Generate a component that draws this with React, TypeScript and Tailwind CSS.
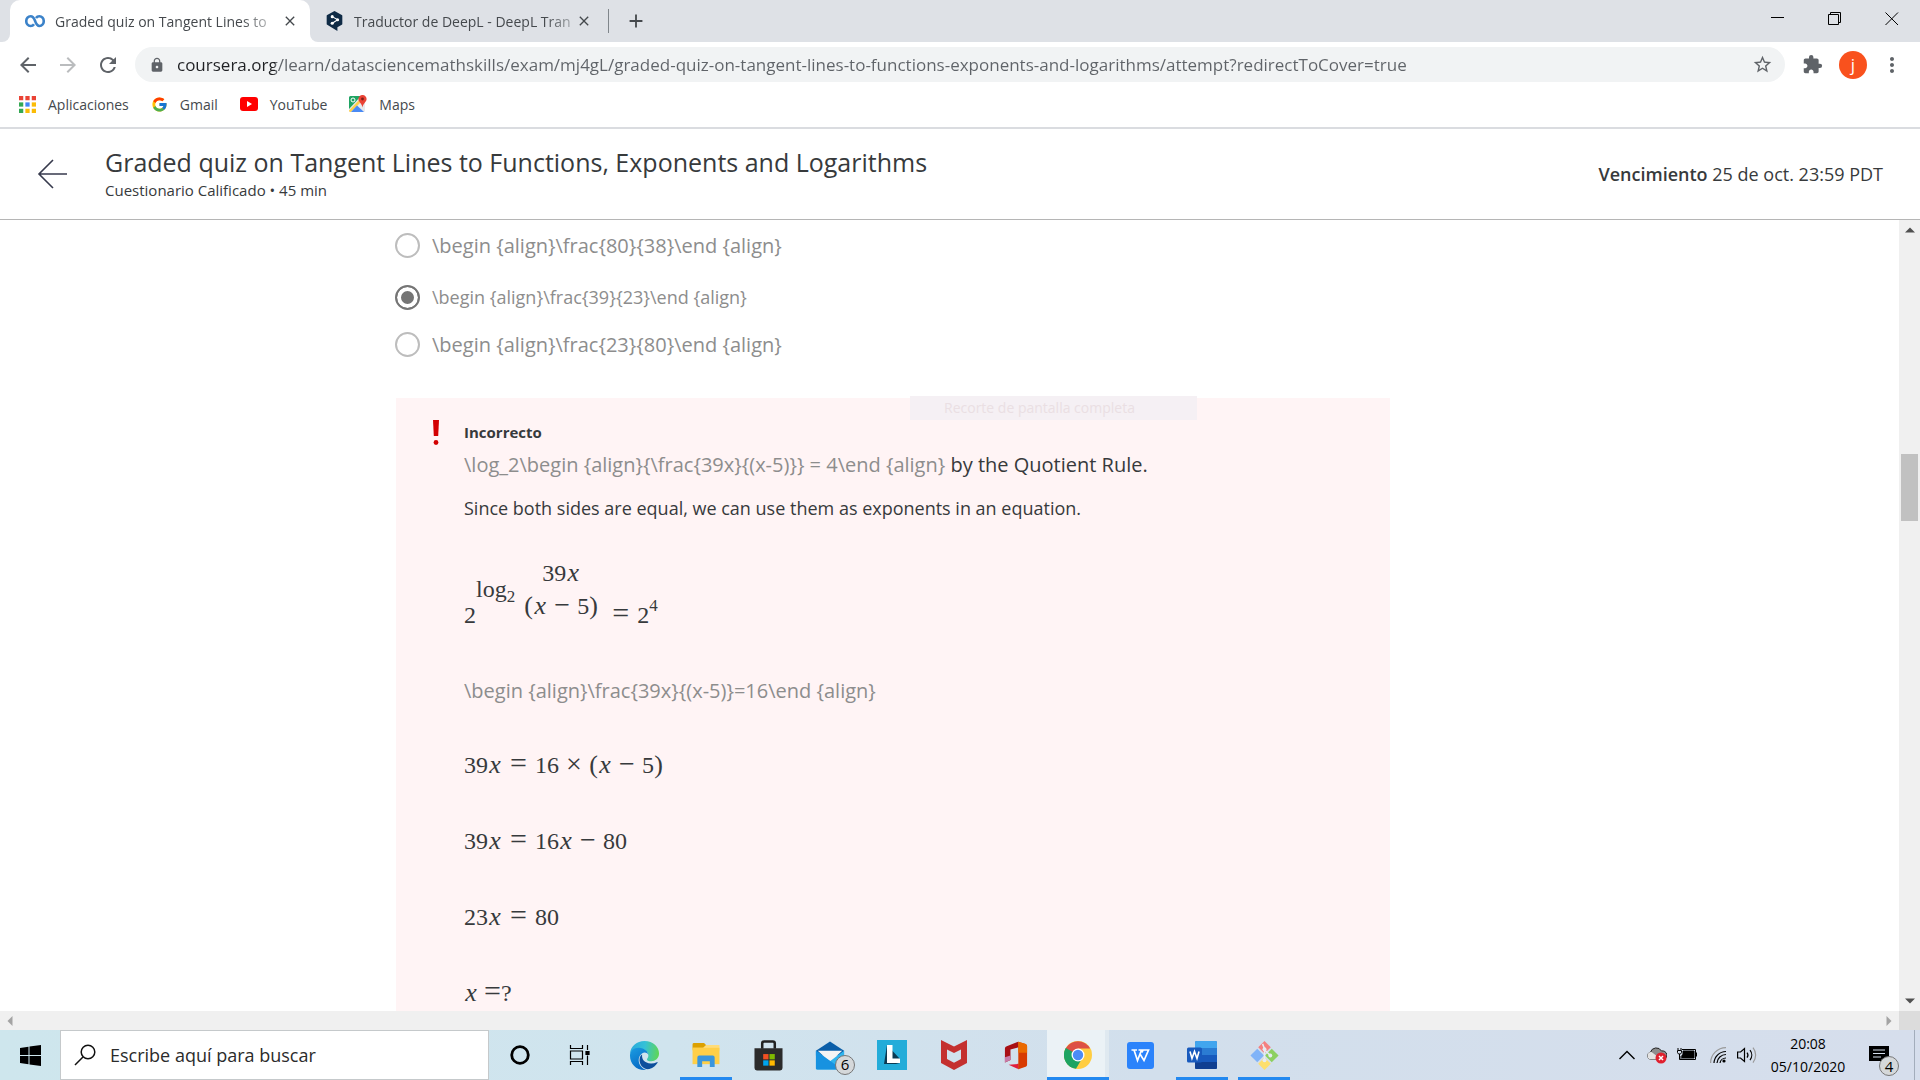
import React from "react";
import {
  MdArrowBack,
  MdArrowForward,
  MdRefresh,
  MdLock,
  MdStarBorder,
  MdExtension,
  MdMoreVert,
  MdAdd,
  MdClose,
} from "react-icons/md";
import { FcGoogle } from "react-icons/fc";

/* ---------- Browser chrome ---------- */

function CourseraIcon() {
  return (
    <svg viewBox="0 0 20 14" className="h-[14px] w-5 shrink-0" fill="none" stroke="#3b82c9" strokeWidth="2.600">
      <path d="M9 10.200C8.200 11.400 7 12 5.600 12A4.300 4.600 0 0 1 1.300 7 4.300 4.600 0 0 1 5.600 2.200C8 2.200 9 4 10 6.800S12 12 14.400 12A4.300 4.600 0 0 0 18.700 7 4.300 4.600 0 0 0 14.400 2.200C13 2.200 11.800 2.800 11 4" />
    </svg>
  );
}

function DeepLIcon() {
  return (
    <svg viewBox="0 0 18 22" className="h-5 w-[17px] shrink-0">
      <path d="M9 0l8 4.400a1 1 0 0 1 .6.900v9a1 1 0 0 1-.6.900L12.200 18v4L1 15.200a1 1 0 0 1-.6-.9v-9A1 1 0 0 1 1 4.400z" fill="#0f2b46" />
      <path d="M6.500 6.200l6 3.500-6 3.800" fill="none" stroke="#fff" strokeWidth="1.200" />
      <g fill="#fff">
        <circle cx="6.500" cy="6.200" r="1.700" />
        <circle cx="12.400" cy="9.700" r="1.700" />
        <circle cx="6.500" cy="13.400" r="1.700" />
      </g>
    </svg>
  );
}

function AppsIcon() {
  const colors = ["#ea4335", "#ea4335", "#ea4335", "#34a853", "#4285f4", "#fbbc05", "#34a853", "#fbbc05", "#fbbc05"];
  return (
    <svg viewBox="0 0 16 16" className="size-[17px]">
      {colors.map((c, i) => (
        <rect key={i} x={(i % 3) * 6} y={Math.floor(i / 3) * 6} width="4" height="4" fill={c} />
      ))}
    </svg>
  );
}

function YouTubeIcon() {
  return (
    <svg viewBox="0 0 18 14" className="h-[14px] w-[18px]">
      <rect width="18" height="14" rx="3" fill="#f00" />
      <path d="M7 4v6l5-3z" fill="#fff" />
    </svg>
  );
}

function MapsIcon() {
  return (
    <svg viewBox="0 0 18 18" className="size-[18px]">
      <rect x="0" y="1" width="16" height="16" rx="1.500" fill="#e8eaed" />
      <path d="M0 2.500A1.500 1.500 0 0 1 1.500 1H12L0 14z" fill="#1fa463" />
      <path d="M0 15.500L12.500 2.500l2 2L2 17a1.500 1.500 0 0 1-2-1.500z" fill="#ffd04b" />
      <path d="M2 17l6-6.500 7 6.500z" fill="#4a8af4" />
      <circle cx="4" cy="5" r="2" fill="none" stroke="#fff" strokeWidth="1" />
      <path d="M13.500 0A4 4 0 0 1 17.600 4c0 3-3.400 4.200-4.100 8.500C12.800 8.200 9.400 7 9.400 4a4 4 0 0 1 4.100-4z" fill="#ea4335" />
      <circle cx="13.500" cy="4" r="1.400" fill="#801f17" />
    </svg>
  );
}

function TabStrip() {
  return (
    <div className="flex h-[42px] shrink-0 items-stretch bg-[#dee1e6] text-[14px] text-[#45494d]">
      <div className="w-[10px] shrink-0 bg-white">
        <div className="h-full rounded-br-lg bg-[#dee1e6]" />
      </div>
      <div className="flex w-[300px] items-center rounded-t-[10px] bg-white pr-3 pl-[15px]">
        <CourseraIcon />
        <span className="ml-[10px] whitespace-nowrap [mask-image:linear-gradient(to_right,black_88%,rgba(0,0,0,0.4))]">
          Graded quiz on Tangent Lines to
        </span>
        <button aria-label="Cerrar pestaña" className="ml-auto">
          <MdClose className="size-4" />
        </button>
      </div>
      <div className="shrink-0 bg-white">
        <div className="flex h-full w-[298px] items-center rounded-bl-lg bg-[#dee1e6] pr-4 pl-4">
          <DeepLIcon />
          <span className="ml-[11px] whitespace-nowrap [mask-image:linear-gradient(to_right,black_88%,rgba(0,0,0,0.4))]">
            Traductor de DeepL - DeepL Tran
          </span>
          <button aria-label="Cerrar pestaña" className="ml-auto">
            <MdClose className="size-4" />
          </button>
        </div>
      </div>
      <div className="my-auto h-6 w-px bg-[#80868b]" />
      <button aria-label="Nueva pestaña" className="ml-4">
        <MdAdd className="size-[22px]" />
      </button>
      <div className="ml-auto flex items-center gap-[43px] pr-[21px] pb-2 text-black">
        <button aria-label="Minimizar">
          <svg viewBox="0 0 14 14" className="size-[14px]" stroke="currentColor">
            <path d="M0 7.500h13" />
          </svg>
        </button>
        <button aria-label="Restaurar">
          <svg viewBox="0 0 14 14" className="mt-1 size-[14px]" stroke="currentColor" fill="none">
            <path d="M.5 2.500h10v10H.5zM2.500 2.500v-2h10v10h-2" />
          </svg>
        </button>
        <button aria-label="Cerrar">
          <svg viewBox="0 0 14 14" className="mt-1 size-[14px]" stroke="currentColor">
            <path d="M.5.500l12.500 12.500M13 .5L.5 13" />
          </svg>
        </button>
      </div>
    </div>
  );
}

function Toolbar() {
  return (
    <div className="flex h-[45px] shrink-0 items-center bg-white text-[#5f6368]">
      <button aria-label="Atrás" className="ml-4">
        <MdArrowBack className="size-6" />
      </button>
      <button aria-label="Adelante" className="ml-4 text-[#babcbe]">
        <MdArrowForward className="size-6" />
      </button>
      <button aria-label="Recargar" className="ml-4">
        <MdRefresh className="size-6" />
      </button>
      <div className="ml-[15px] flex h-[35px] flex-1 items-center rounded-full bg-[#f1f3f4] pr-3 pl-[14px]">
        <MdLock className="size-4 shrink-0" />
        <input
          aria-label="Dirección"
          className="ml-3 flex-1 bg-[linear-gradient(to_right,#202124_98px,#5f6368_98px)] bg-clip-text text-[17px] text-transparent outline-none"
          defaultValue="coursera.org/learn/datasciencemathskills/exam/mj4gL/graded-quiz-on-tangent-lines-to-functions-exponents-and-logarithms/attempt?redirectToCover=true"
        />
        <button aria-label="Añadir a marcadores">
          <MdStarBorder className="size-[21px]" />
        </button>
      </div>
      <button aria-label="Extensiones" className="ml-[17px]">
        <MdExtension className="size-[21px]" />
      </button>
      <button
        aria-label="Perfil"
        className="ml-4 flex size-7 items-center justify-center rounded-full bg-[#f9511d] text-[17px] leading-none text-white"
      >
        j
      </button>
      <button aria-label="Menú" className="mr-4 ml-[13px]">
        <MdMoreVert className="size-6" />
      </button>
    </div>
  );
}

function Bookmark({ icon, label }: { icon: React.ReactNode; label: string }) {
  return (
    <a href="#" className="flex items-center gap-3">
      {icon}
      {label}
    </a>
  );
}

function BookmarksBar() {
  return (
    <nav className="flex h-[42px] shrink-0 items-center gap-[22px] border-b-2 border-[#dadce0] bg-white pb-[6px] pl-[19px] text-[14px] text-[#45494d]">
      <Bookmark icon={<AppsIcon />} label="Aplicaciones" />
      <Bookmark icon={<FcGoogle className="size-[17px]" />} label="Gmail" />
      <Bookmark icon={<YouTubeIcon />} label="YouTube" />
      <Bookmark icon={<MapsIcon />} label="Maps" />
    </nav>
  );
}

/* ---------- Quiz page ---------- */

function QuizHeader() {
  return (
    <header className="flex h-[91px] shrink-0 items-center border-b border-[#b5b5b5] bg-white pr-[37px] pl-[37px] text-[#373a3c]">
      <button aria-label="Volver">
        <svg viewBox="0 0 32 30" className="h-[30px] w-8" fill="none" stroke="#373a4d" strokeWidth="1.600">
          <path d="M30 15H2M16 1L2 15l14 14" />
        </svg>
      </button>
      <div className="ml-9">
        <h1 className="text-[25px] leading-8">Graded quiz on Tangent Lines to Functions, Exponents and Logarithms</h1>
        <p className="text-[15px] leading-6">Cuestionario Calificado • 45 min</p>
      </div>
      <p className="ml-auto text-[18px]">
        <strong className="font-semibold">Vencimiento</strong> 25 de oct. 23:59 PDT
      </p>
    </header>
  );
}

function Sym({ children }: { children: React.ReactNode }) {
  return <i className="inline-block w-[14px] text-center text-[26px] leading-5">{children}</i>;
}
function Rel() {
  return <span className="inline-block w-[33px] text-center text-[30px] leading-5">=</span>;
}
function Bin({ children }: { children: React.ReactNode }) {
  return <span className="inline-block w-[30px] text-center text-[28px] leading-5">{children}</span>;
}
function Paren({ children }: { children: React.ReactNode }) {
  return <span className="inline-block w-[9px] text-center text-[26px] leading-5">{children}</span>;
}

function PowerEquation() {
  return (
    <div className="mt-[38px] flex h-[66px] items-start font-['Liberation_Serif',serif] text-[24px] leading-6">
      <span className="pt-[42px]">2</span>
      <span className="pt-4">log</span>
      <span className="pt-6 text-[17px]">2</span>
      <span className="ml-[9px] flex flex-col items-center gap-[9px]">
        <span className="h-6">
          39<Sym>x</Sym>
        </span>
        <span className="h-6">
          <Paren>(</Paren>
          <Sym>x</Sym>
          <Bin>−</Bin>5<Paren>)</Paren>
        </span>
      </span>
      <span className="ml-[6px] pt-[42px]">
        <Rel />2
      </span>
      <span className="pt-[33px] text-[17px]">4</span>
    </div>
  );
}

function Option({ label, size, row, checked }: { label: string; size: string; row: string; checked?: boolean }) {
  return (
    <label className={`flex items-center gap-3 text-[#8d8d8d] ${row} ${size}`}>
      <input
        type="radio"
        name="answer"
        defaultChecked={checked}
        className="size-[25px] appearance-none rounded-full border-2 border-[#bdbdbd] bg-white checked:border-[#757575] checked:bg-[#757575] checked:shadow-[inset_0_0_0_4px_white]"
      />
      {label}
    </label>
  );
}

function QuizContent() {
  return (
    <main className="min-w-0 flex-1 overflow-hidden bg-white pl-[395px] text-[#373a3c]">
      <Option row="h-[51px]" size="text-[20px]" label="\begin {align}\frac{80}{38}\end {align}" />
      <Option row="h-[52px]" size="text-[18px]" label="\begin {align}\frac{39}{23}\end {align}" checked />
      <Option row="h-[43px]" size="text-[20px]" label="\begin {align}\frac{23}{80}\end {align}" />

      <section className="relative mt-8 ml-px flex max-w-[994px] items-start bg-[#fff4f5] pt-5 pb-10 pl-[37px]">
        <div className="absolute -top-0.5 left-[514px] h-6 w-[287px] bg-[#f5f0f4] pl-[34px] text-[14px] leading-6 text-[#eadfe3]">
          Recorte de pantalla completa
        </div>
        <svg viewBox="0 0 6 25" className="mt-[2px] h-[25px] w-[6px]" fill="#d30001">
          <path d="M0 0h6l-.8 16H.8z" />
          <circle cx="3" cy="22.500" r="2.400" />
        </svg>
        <div className="ml-[25px]">
          <h2 className="text-[15px] leading-7 font-bold">Incorrecto</h2>
          <p className="mt-1 text-[20px] leading-[30px]">
            <span className="text-[#8d8d8d]">{"\\log_2\\begin {align}{\\frac{39x}{(x-5)}} = 4\\end {align}"}</span> by the
            Quotient Rule.
          </p>
          <p className="mt-[13px] text-[18px] leading-[30px]">
            Since both sides are equal, we can use them as exponents in an equation.
          </p>
          <PowerEquation />
          <p className="mt-[49px] text-[20px] leading-[30px] text-[#8d8d8d]">
            {"\\begin {align}\\frac{39x}{(x-5)}=16\\end {align}"}
          </p>
          <div className="mt-[47px] flex flex-col gap-[52px] font-['Liberation_Serif',serif] text-[24px] leading-6">
            <p className="h-6">
              39<Sym>x</Sym>
              <Rel />
              16<Bin>×</Bin>
              <Paren>(</Paren>
              <Sym>x</Sym>
              <Bin>−</Bin>5<Paren>)</Paren>
            </p>
            <p className="h-6">
              39<Sym>x</Sym>
              <Rel />
              16<Sym>x</Sym>
              <Bin>−</Bin>
              80
            </p>
            <p className="h-6">
              23<Sym>x</Sym>
              <Rel />
              80
            </p>
            <p className="h-6">
              <Sym>x</Sym>
              <span className="ml-[6px] inline-block text-[30px] leading-5">=</span>?
            </p>
          </div>
        </div>
      </section>
    </main>
  );
}

function Arrow({ d, label, color }: { d: string; label: string; color: string }) {
  return (
    <button aria-label={label} className="flex size-5 items-center justify-center">
      <svg viewBox="0 0 10 10" className={`size-[10px] ${color}`} fill="currentColor">
        <path d={d} />
      </svg>
    </button>
  );
}

/* ---------- Taskbar ---------- */

const EdgeIcon = () => (
  <svg viewBox="0 0 32 32" className="size-[31px]">
    <defs>
      <linearGradient id="eg1" x1="0" y1="0.300" x2="1" y2="0.400">
        <stop offset="0" stopColor="#2aa9dc" />
        <stop offset="0.500" stopColor="#35c1d8" />
        <stop offset="1" stopColor="#5fd658" />
      </linearGradient>
      <linearGradient id="eg2" x1="0" y1="0" x2="0.500" y2="1">
        <stop offset="0" stopColor="#1b9de2" />
        <stop offset="1" stopColor="#0669c4" />
      </linearGradient>
    </defs>
    <path d="M1 14C2 6 8 1 16 1c9 0 15 6 15 13 0 5-4 8-8 8-3 0-4.500-1-4.500-2 0-.8 1.500-1.500 1.500-4 0-4-4-7-9-7-5 0-8 2-10 5z" fill="url(#eg1)" />
    <path d="M1 16c0-5 4-8 9-8 6 0 10 4 10 8 0-2-2-3-4-3-3 0-6 4-6 8 0 5 4 9 8 10-10 1-17-6-17-15z" fill="url(#eg2)" />
    <path d="M11 19c-1 6 4 12 10 11 4-1 7-4 8.500-6.500.3-.6-.3-.9-.8-.6-2 1-4 1.400-6.200 1.300C16 24 13 20 13.500 15c-1 .6-2.200 2-2.500 4z" fill="#0d4f9c" />
  </svg>
);

const FolderIcon = () => (
  <svg viewBox="0 0 28 26" className="h-[25px] w-7">
    <path d="M0 1.500A1.500 1.500 0 0 1 1.500 0H12l2 2v5H0z" fill="#dca000" />
    <path d="M14 2h14v6H0V5h11z" fill="#ffdc78" />
    <path d="M0 5h28v17H0z" fill="#ffcf48" />
    <path d="M5 15a2 2 0 0 1 2-2h14a2 2 0 0 1 2 2v10h-5v-6h-8v6H5z" fill="#3a96dd" />
  </svg>
);

const StoreIcon = () => (
  <svg viewBox="0 0 30 32" className="h-[31px] w-[29px]">
    <path d="M8.500 9V3.500A2 2 0 0 1 10.500 1.500h9a2 2 0 0 1 2 2V9" fill="none" stroke="#222" strokeWidth="2.600" />
    <path d="M.5 8.500h29V29a2.500 2.500 0 0 1-2.500 2.500H3A2.500 2.500 0 0 1 .5 29z" fill="#2b2b2b" />
    <path d="M9.500 14.500H15v5.500H9.500z" fill="#f25022" />
    <path d="M16 14.500h5.500V20H16z" fill="#7fba00" />
    <path d="M9.500 21H15v5.500H9.500z" fill="#00a4ef" />
    <path d="M16 21h5.500v5.500H16z" fill="#ffb900" />
  </svg>
);

const Badge = ({ children, className }: { children: string; className: string }) => (
  <span
    className={`absolute flex size-5 items-center justify-center rounded-full border border-[#777] bg-[#d5d8da] text-[15px] leading-none font-medium text-black ${className}`}
  >
    {children}
  </span>
);

const MailIcon = () => (
  <span className="relative">
    <svg viewBox="0 0 32 30" className="h-[29px] w-[30px]">
      <path d="M1 10L16 0l15 10v5H1z" fill="#0a5ea8" />
      <path d="M3 10h26l-13 12z" fill="#f4f4f4" />
      <path d="M1 10l15 11 15-11v18.500a1.500 1.500 0 0 1-1.500 1.500h-27A1.500 1.500 0 0 1 1 28.500z" fill="#2fb4ee" />
      <path d="M1 10l28 20H2.500A1.500 1.500 0 0 1 1 28.500z" fill="#1792e0" />
    </svg>
    <Badge className="-right-[10px] -bottom-[5px]">6</Badge>
  </span>
);

const LIcon = () => (
  <svg viewBox="0 0 30 30" className="size-[30px]">
    <rect width="30" height="30" fill="#23acd9" />
    <path d="M10 5L7 24h12l4-1v-4z" fill="#0b3a52" />
    <path d="M10 5h5.500v13.500H23V23H10z" fill="#fff" />
  </svg>
);

const ShieldIcon = () => (
  <svg viewBox="0 0 28 30" className="h-[30px] w-7">
    <path d="M1 0l13 6.500L27 0v23l-13 7-13-7zM7 9.500V19l7 3.800 7-3.800V9.500l-7 3.500z" fill="#c4302f" fillRule="evenodd" />
  </svg>
);

const OfficeIcon = () => (
  <svg viewBox="0 0 26 30" className="h-[29px] w-6">
    <path d="M15.500 0L3 5a2.500 2.500 0 0 0-2 2.500v15L7 20V8.500L16 6z" fill="#a80f14" />
    <path d="M1 22.500L7 20v-5L1 17z" fill="#c77ba8" />
    <path d="M5 25l11-1v6z" fill="#e01f3d" />
    <path d="M15.500 0L23.500 2.500A2.500 2.500 0 0 1 25 5v20a2.500 2.500 0 0 1-1.500 2.300L15.500 30z" fill="#d83b01" />
    <path d="M15.500 0L23.500 2.500A2.500 2.500 0 0 1 25 5v7h-9.500z" fill="#ea6a00" />
  </svg>
);

const ChromeIcon = () => (
  <svg viewBox="0 0 28 28" className="size-7">
    <circle cx="14" cy="14" r="14" fill="#ffcd41" />
    <path d="M14 14L1.900 7A14 14 0 0 0 12 27.850l6-10.400z" fill="#1da462" />
    <path d="M1.900 7A14 14 0 0 1 26.100 7.500H14L8 17.500z" fill="#dd5144" />
    <path d="M14 14l-6-3.500L1.900 7A14 14 0 0 0 8 26.600z" fill="#1da462" />
    <circle cx="14" cy="14" r="6.500" fill="#fff" />
    <circle cx="14" cy="14" r="5.200" fill="#4c8bf5" />
  </svg>
);

const WpsIcon = () => (
  <svg viewBox="0 0 27 27" className="size-[27px]">
    <rect width="27" height="27" rx="3" fill="#2b83fb" />
    <path d="M4.500 8h5.500M7 8l3.500 10.500L14.500 8h-3M13 12l4 6.500L21.500 8H16l-1 2.500" fill="none" stroke="#fff" strokeWidth="1.700" />
  </svg>
);

const WordIcon = () => (
  <svg viewBox="0 0 30 28" className="h-7 w-[30px]">
    <rect x="8" width="22" height="28" rx="1.500" fill="#185abd" />
    <path d="M8 7V1.500A1.500 1.500 0 0 1 9.500 0h19A1.500 1.500 0 0 1 30 1.500V7z" fill="#41a5ee" />
    <path d="M8 7h22v7H8z" fill="#2b7cd3" />
    <path d="M8 21h22v5.500a1.500 1.500 0 0 1-1.500 1.500h-19A1.500 1.500 0 0 1 8 26.500z" fill="#103f91" />
    <rect y="6.500" width="15" height="15" rx="1.500" fill="#185abd" />
    <path d="M3 10.500l2 7 2.500-7 2.500 7 2-7" fill="none" stroke="#fff" strokeWidth="1.600" />
  </svg>
);

const GitIcon = () => (
  <svg viewBox="0 0 32 32" className="size-[31px]">
    <path d="M16 1l6.500 6.500L16 14 9.500 7.500z" fill="#f58080" />
    <path d="M8.500 9l7 7-7 7-7-7z" fill="#80b3f8" />
    <path d="M23.500 9l7 7-7 7-7-7z" fill="#8cd060" />
    <path d="M16 18l6.500 6.500L16 31l-6.500-6.500z" fill="#fddf6d" />
    <path d="M14 4l2 5v12M16 10l6 6" fill="none" stroke="#e6ecf2" strokeWidth="1.600" />
    <g fill="#e6ecf2">
      <circle cx="16" cy="9.500" r="2" />
      <circle cx="22" cy="16" r="2" />
      <circle cx="16" cy="21" r="2" />
    </g>
  </svg>
);

const CortanaIcon = () => (
  <svg viewBox="0 0 20 20" className="size-5">
    <circle cx="10" cy="10" r="8.300" fill="none" stroke="#000" strokeWidth="2.800" />
  </svg>
);

const TaskViewIcon = () => (
  <svg viewBox="0 0 22 20" className="mr-1 h-5 w-[22px]" fill="none" stroke="#000" strokeWidth="1.200">
    <path d="M1.500 0v3.500h12V0M1.500 6h12v8h-12zM1.500 20v-3.500h12V20M18.500 0v5M18.500 10.500V20" />
    <path d="M17 6.500h3v3h-3z" fill="#000" />
  </svg>
);

const tasks: { label: string; icon: React.ReactNode; state?: "running" | "active" }[] = [
  { label: "Cortana", icon: <CortanaIcon /> },
  { label: "Vista de tareas", icon: <TaskViewIcon /> },
  { label: "Edge", icon: <EdgeIcon /> },
  { label: "Explorador de archivos", icon: <FolderIcon />, state: "running" },
  { label: "Store", icon: <StoreIcon /> },
  { label: "Correo", icon: <MailIcon /> },
  { label: "Lenovo", icon: <LIcon /> },
  { label: "McAfee", icon: <ShieldIcon /> },
  { label: "Office", icon: <OfficeIcon /> },
  { label: "Chrome", icon: <ChromeIcon />, state: "active" },
  { label: "WPS", icon: <WpsIcon /> },
  { label: "Word", icon: <WordIcon />, state: "running" },
  { label: "Git", icon: <GitIcon />, state: "running" },
];

function Taskbar() {
  return (
    <footer className="flex h-[50px] shrink-0 items-stretch bg-[linear-gradient(to_right,#cee6ed,#d0e4ee_35%,#d2dfec_60%,#d6deec)] text-black">
      <button aria-label="Inicio" className="flex w-[60px] items-center pl-5">
        <svg viewBox="0 0 21 21" className="size-[21px]">
          <path d="M0 3l8.500-1.200V10H0zM9.500 1.600L21 0v10H9.500zM0 11h8.500v8.200L0 18zM9.500 11H21v10L9.500 19.400z" />
        </svg>
      </button>
      <label className="flex w-[429px] items-center border border-[#c5c9cb] bg-white pl-[13px]">
        <svg viewBox="0 0 22 22" className="size-[22px]" fill="none" stroke="#111" strokeWidth="1.500">
          <circle cx="14" cy="8" r="6.800" />
          <path d="M9.200 12.800L1 21" />
        </svg>
        <input
          aria-label="Buscar"
          placeholder="Escribe aquí para buscar"
          className="ml-[14px] flex-1 text-[18px] outline-none placeholder:text-[#2b2b2b]"
        />
      </label>
      <div className="flex">
        {tasks.map((t) => (
          <button
            key={t.label}
            aria-label={t.label}
            className={`relative flex w-[62px] items-center justify-center ${
              t.state === "active" ? "bg-[#ebf2f6] shadow-[inset_-4px_0_0_#dfe9f0]" : ""
            }`}
          >
            {t.icon}
            {t.state === "running" && <span className="absolute inset-x-[5px] bottom-0 h-[3px] bg-[#2389f0]" />}
            {t.state === "active" && <span className="absolute inset-x-0 bottom-0 h-[3px] bg-[#2389f0]" />}
          </button>
        ))}
      </div>
      <div className="ml-auto flex items-center">
        <button aria-label="Mostrar iconos ocultos">
          <svg viewBox="0 0 16 10" className="h-[10px] w-4" fill="none" stroke="#000" strokeWidth="1.400">
            <path d="M.5 9L8 1.500 15.500 9" />
          </svg>
        </button>
        <svg viewBox="0 0 20 18" className="ml-3 h-[18px] w-5">
          <path d="M4 13.500A3.700 3.700 0 0 1 3.500 6.200 6 6 0 0 1 14.500 5a4.300 4.300 0 0 1 2 8.500z" fill="#8d8d8d" stroke="#222" />
          <path d="M4 13.500A3.700 3.700 0 0 1 4.500 6l10 7.500z" fill="#e3e3e3" />
          <circle cx="14" cy="12" r="5.500" fill="#e0202e" />
          <path d="M12 10l4 4M16 10l-4 4" stroke="#fff" strokeWidth="1.500" />
        </svg>
        <svg viewBox="0 0 20 14" className="ml-[10px] h-[14px] w-5" fill="none" stroke="#000">
          <path d="M5 1.500h13.500v10H4V8M19.500 4.500v4" />
          <path d="M6 3h11v7H5V7h1z" fill="#000" />
          <path d="M1 0v2M4 0v2M.5 2.500h4v2l-1 1.500H1.500l-1-1.500zM2.500 6v5.500H5" />
        </svg>
        <svg viewBox="0 0 16 16" className="ml-[13px] size-4" fill="none" stroke="#000" strokeWidth="1.200">
          <path d="M.6 16A15.400 15.400 0 0 1 16 .6" stroke="#999" />
          <path d="M4 16A12 12 0 0 1 16 4.500M7 16a9 9 0 0 1 9-8.500M10 16a6 6 0 0 1 6-5" />
          <circle cx="14" cy="14" r="1.600" fill="#000" stroke="none" />
        </svg>
        <svg viewBox="0 0 20 18" className="ml-[11px] h-[18px] w-5" fill="none" stroke="#000" strokeWidth="1.200">
          <path d="M.6 6h3L7.500 2.500v13L3.500 12H.6z" />
          <path d="M10 6.500a4 4 0 0 1 0 5M13 4a8 8 0 0 1 0 10" />
          <path d="M16 1.500a12 12 0 0 1 0 15" stroke="#999" />
        </svg>
        <div className="ml-[13px] w-[76px] text-center text-[14px] leading-[23px] whitespace-nowrap">
          <p>20:08</p>
          <p>05/10/2020</p>
        </div>
        <button aria-label="Notificaciones" className="relative ml-[23px]">
          <svg viewBox="0 0 20 18" className="h-[18px] w-5">
            <path d="M0 0h20v15h-6v3l-3-3H0z" />
            <path d="M4 4h12M4 7.500h12M4 11h8" stroke="#d5dfec" />
          </svg>
          <Badge className="-right-[10px] -bottom-3">4</Badge>
        </button>
        <div className="mr-[5px] ml-[25px] h-full w-px bg-[#a3adbb]" />
      </div>
    </footer>
  );
}

export default function App() {
  return (
    <div className="flex h-screen flex-col overflow-hidden font-['Open_Sans',sans-serif]">
      <TabStrip />
      <Toolbar />
      <BookmarksBar />
      <QuizHeader />
      <div className="flex min-h-0 flex-1">
        <QuizContent />
        <div className="flex w-[21px] shrink-0 flex-col items-center bg-[#f0f0f0]">
          <Arrow label="Subir" d="M0 7.500l5-5 5 5z" color="text-[#505050]" />
          <div className="mt-[214px] h-[67px] w-[17px] bg-[#c1c1c1]" />
          <div className="mt-auto">
            <Arrow label="Bajar" d="M0 2.500l5 5 5-5z" color="text-[#505050]" />
          </div>
        </div>
      </div>
      <div className="flex h-[19px] shrink-0 items-center bg-[#f0f0f0]">
        <Arrow label="Izquierda" d="M7.500 0l-5 5 5 5z" color="text-[#a3a3a3]" />
        <div className="ml-auto">
          <Arrow label="Derecha" d="M2.500 0l5 5-5 5z" color="text-[#a3a3a3]" />
        </div>
        <div className="h-full w-[21px] bg-[#dcdcdc]" />
      </div>
      <Taskbar />
    </div>
  );
}
